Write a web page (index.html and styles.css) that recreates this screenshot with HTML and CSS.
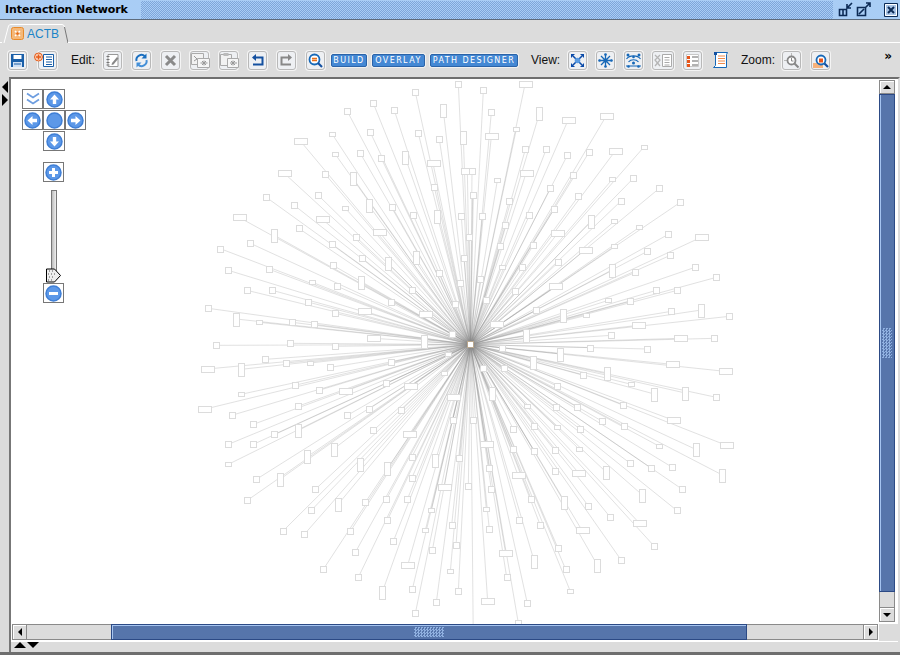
FILE: index.html
```html
<!DOCTYPE html>
<html lang="en">
<head>
<meta charset="utf-8">
<title>Interaction Network</title>
<link rel="stylesheet" href="styles.css">
</head>
<body>
<div class="window">
  <header class="titlebar">
    <span class="title">Interaction Network</span>
    <span class="dots"></span>
    <span class="winbtns">
      <svg class="winicon" width="15" height="15" viewBox="0 0 15 15"><path d="M1.500 7.500h7v6h-7z M5 8v5 M9 6l5-5 M9 2v4h4" fill="none" stroke="#0c2a55" stroke-width="1.600"/></svg>
      <svg class="winicon" width="15" height="15" viewBox="0 0 15 15"><path d="M1.500 5.500h8v8h-8z M3 12l5-5 M9 6l5-5 M10 1h4v4" fill="none" stroke="#0c2a55" stroke-width="1.600"/></svg>
      <svg class="winclose" width="14" height="14" viewBox="0 0 14 14"><path d="M.5.5h13v13H.5z" fill="#a9c4e6" stroke="#0c2a55"/><path d="M1.500 1.500h11v11h-11z" fill="none" stroke="#fff"/><path d="M4 4l6 6M10 4l-6 6" stroke="#0c2a55" stroke-width="2"/></svg>
    </span>
  </header>

  <nav class="tabbar">
    <div class="tab">
      <svg class="tabshape" width="66" height="20" viewBox="0 0 66 20"><path d="M2 19L6.500 2Q7 .5 9 .5H60Q62 .5 62.500 3" fill="none" stroke="#fff"/><path d="M62.500 3L66 19" fill="none" stroke="#777"/></svg>
      <svg class="tabicon" width="13" height="13" viewBox="0 0 13 13"><rect x=".5" y=".5" width="12" height="12" rx="2" fill="#f5b878" stroke="#e88a2a"/><path d="M4 4l5 5M9 4l-5 5" stroke="#fff" stroke-width="1.500"/><circle cx="6.500" cy="6.500" r="1.500" fill="#e8701a"/></svg>
      <span>ACTB</span>
    </div>
  </nav>

  <div class="toolbar">
    <div class="group file-group">
      <button class="ic"><svg width="17" height="17" viewBox="0 0 17 17"><path d="M2 2h13v13H2z" fill="#1a5fa8"/><path d="M4.500 3h8v4h-8z" fill="#fff"/><path d="M4 10h9v5H4z" fill="#cfe0f4"/><path d="M5 12h7" stroke="#1a5fa8"/></svg></button>
      <button class="ic ic-badge"><svg width="17" height="17" viewBox="0 0 17 17"><path d="M4.500 2.500h10v12h-10z" fill="#fff" stroke="#1a5fa8"/><path d="M7 5h6M7 7.500h6M7 10h6M7 12.500h6" stroke="#1a5fa8"/></svg><svg class="badge" width="9" height="10" viewBox="0 0 9 10"><circle cx="4.500" cy="5" r="4" fill="#f8cdb4" stroke="#e85c18"/><path d="M2 5h5M4.500 2.500v5" stroke="#e85c18" stroke-width="1.400"/></svg></button>
    </div>
    <span class="label label-edit">Edit:</span>
    <div class="group edit-group">
      <button class="ic"><svg width="17" height="17" viewBox="0 0 17 17"><path d="M4 2.500h10v12H4z" fill="#fff" stroke="#999"/><path d="M2.500 4.500h3M2.500 7.500h3M2.500 10.500h3M2.500 13h3" stroke="#777"/><path d="M8 11l5-6 1.500 1.500-5 6-2 .5z" fill="#888"/></svg></button>
      <button class="ic"><svg width="17" height="17" viewBox="0 0 17 17"><path d="M3.500 9A5 5 0 0 1 12 4.500" fill="none" stroke="#1a6fc0" stroke-width="2"/><path d="M13.500 1.500v5h-5z" fill="#1a6fc0"/><path d="M13.500 8A5 5 0 0 1 5 12.500" fill="none" stroke="#4590d8" stroke-width="2"/><path d="M3.500 15.500v-5h5z" fill="#4590d8"/></svg></button>
      <button class="ic"><svg width="17" height="17" viewBox="0 0 17 17"><path d="M4 4l9 9M13 4l-9 9" stroke="#8a8a8a" stroke-width="3"/></svg></button>
      <button class="ic"><svg class="wide-svg" width="21" height="17" viewBox="0 0 21 17"><path d="M1.500 1.500h12v11h-12z" fill="#f2f2f2" stroke="#aaa"/><path d="M7.500 6.500h12v9h-12z" fill="#f6f6f6" stroke="#aaa"/><path d="M4 4l3 3M4 9l3-2M12 9l4 4M16 9l-4 4M10.500 11h7M14 8.500v5" stroke="#999"/></svg></button>
      <button class="ic"><svg class="wide-svg" width="21" height="17" viewBox="0 0 21 17"><path d="M1.500 2.500h11v11h-11z" fill="#f2f2f2" stroke="#aaa"/><path d="M4.500 1h5v3h-5z" fill="#bbb"/><path d="M8.500 6.500h11v9h-11z" fill="#f6f6f6" stroke="#aaa"/><path d="M12 9l4 4M16 9l-4 4M11 11h7M14 8.500v5" stroke="#999"/></svg></button>
      <button class="ic"><svg width="17" height="17" viewBox="0 0 17 17"><path d="M6 5.500h7.500v7H4" fill="none" stroke="#1450a0" stroke-width="2"/><path d="M7 2v7L3 5.500z" fill="#1450a0"/></svg></button>
      <button class="ic"><svg width="17" height="17" viewBox="0 0 17 17"><path d="M11 5.500H3.500v7H13" fill="none" stroke="#888" stroke-width="2"/><path d="M10 2v7l4-3.500z" fill="#888"/></svg></button>
      <button class="ic"><svg width="17" height="17" viewBox="0 0 17 17"><circle cx="7.500" cy="7.500" r="5" fill="#fff" stroke="#1668b8" stroke-width="1.800"/><path d="M5 6.500h5M5 8.500h5" stroke="#e8701a" stroke-width="1.500"/><path d="M11 11l4 4" stroke="#1450a0" stroke-width="2.200"/></svg></button>
    </div>
    <div class="group action-group">
      <button class="pill pill-build">BUILD</button>
      <button class="pill pill-overlay">OVERLAY</button>
      <button class="pill pill-path">PATH DESIGNER</button>
    </div>
    <span class="label label-view">View:</span>
    <div class="group view-group">
      <button class="ic"><svg width="17" height="17" viewBox="0 0 17 17"><path d="M2 2h4L2 6zM15 2v4l-4-4zM2 15v-4l4 4zM15 15h-4l4-4z" fill="#0a4aa8"/><path d="M4 4l9 9M13 4l-9 9" stroke="#0a4aa8" stroke-width="1.500"/><circle cx="8.500" cy="8.500" r="2.800" fill="#5a9ae0"/></svg></button>
      <button class="ic"><svg width="17" height="17" viewBox="0 0 17 17"><path d="M8.500 2v13M2 8.500h13M4 4l9 9M13 4l-9 9" stroke="#1668b8" stroke-width="1.300"/><circle cx="8.500" cy="8.500" r="2" fill="#1668b8"/><circle cx="8.500" cy="2.500" r="1.300" fill="#1668b8"/><circle cx="8.500" cy="14.500" r="1.300" fill="#1668b8"/><circle cx="2.500" cy="8.500" r="1.300" fill="#1668b8"/><circle cx="14.500" cy="8.500" r="1.300" fill="#1668b8"/></svg></button>
      <button class="ic"><svg width="17" height="17" viewBox="0 0 17 17"><path d="M1.500 7A8 6 0 0 1 15.500 7M3.500 10A6 5 0 0 1 13.500 10M1 14h15" fill="none" stroke="#1668b8" stroke-width="1.200"/><circle cx="3" cy="3" r="1.500" fill="#1668b8"/><circle cx="14" cy="3" r="1.500" fill="#1668b8"/><circle cx="8.500" cy="5" r="1.300" fill="#1668b8"/><circle cx="8.500" cy="11" r="1.500" fill="#1668b8"/><circle cx="3.500" cy="14.500" r="1.300" fill="#1668b8"/><circle cx="13.500" cy="14.500" r="1.300" fill="#1668b8"/></svg></button>
      <button class="ic ic-wide"><svg width="20" height="17" viewBox="0 0 20 17"><path d="M9.500 2.500h9v12h-9z" fill="#fff" stroke="#aaa"/><path d="M11.500 5.500h5M11.500 8h5M11.500 10.500h5M11.500 13h5" stroke="#aaa"/><path d="M2 3l5 5-5 6M7 3L2 8l5 6" fill="none" stroke="#b5b5b5" stroke-width="1.300"/></svg></button>
      <button class="ic"><svg width="17" height="17" viewBox="0 0 17 17"><path d="M2.500 2.500h12v12h-12z" fill="#fff" stroke="#c8c8c8"/><path d="M3 4h3v3H3zM3 8h3v3H3zM3 12h3v3H3z" fill="#e8561a"/><path d="M8 5h6M8 9h6M8 13h6" stroke="#999" stroke-width="1.500"/></svg></button>
      <button class="ic ic-plain"><svg width="17" height="19" viewBox="0 0 17 19"><path d="M3.500 1.500h12l-1 2v13H1.500l2-2z" fill="#fff" stroke="#1668b8"/><path d="M6 5h7M6 7.500h7M6 10h7M6 12.500h7" stroke="#f08a4a"/><path d="M2 1h3v3H2z" fill="#1450a0"/></svg></button>
    </div>
    <span class="label label-zoom">Zoom:</span>
    <div class="group zoom-group">
      <button class="ic"><svg width="17" height="17" viewBox="0 0 17 17"><path d="M8.500 1v6M1 8.500h6" stroke="#b8b8b8"/><circle cx="8.500" cy="8.500" r="4" fill="#fff" stroke="#888" stroke-width="1.800"/><path d="M8.500 6v3h2" fill="none" stroke="#888"/><path d="M11.500 11.500l4 4" stroke="#888" stroke-width="2.200"/></svg></button>
      <button class="ic"><svg width="17" height="17" viewBox="0 0 17 17"><path d="M1 11h10v5H1z" fill="#f6b27c"/><circle cx="9" cy="8" r="4.500" fill="#fff" stroke="#1668b8" stroke-width="1.800"/><path d="M7 6.500h4v4H7z" fill="#e8561a"/><path d="M12.500 11.500l3.500 3.500" stroke="#1450a0" stroke-width="2.200"/></svg></button>
    </div>
    <span class="overflow">&raquo;</span>
  </div>

  <div class="main">
    <aside class="rail">
      <span class="tri tri-left"></span>
      <span class="tri tri-right"></span>
    </aside>
    <div class="pane">
      <div class="view">
        <div class="canvas" id="canvas">
          <svg class="network" id="network" width="868" height="545" viewBox="11 79 868 545"></svg>
          <div class="navpanel">
            <div class="navgrid">
              <button class="cell"><svg width="16" height="16" viewBox="0 0 16 16"><path d="M2 2.500l6 4 6-4M2 8.500l6 4 6-4" fill="none" stroke="#6d9de0" stroke-width="1.700"/></svg></button>
              <button class="cell"><svg class="orb" width="17" height="17" viewBox="0 0 17 17"><circle class="orbfill" cx="8.500" cy="8.500" r="7.500"/><path d="M8.500 3.500L4 8.500h2.800v4.500h3.400V8.500H13z" fill="#fff"/></svg></button>
              <span class="cell-empty"></span>
              <button class="cell"><svg class="orb" width="17" height="17" viewBox="0 0 17 17"><circle class="orbfill" cx="8.500" cy="8.500" r="7.500"/><path d="M3.500 8.500l5-4.500v2.800H13v3.400H8.500V13z" fill="#fff"/></svg></button>
              <button class="cell"><svg class="orb" width="17" height="17" viewBox="0 0 17 17"><circle class="orbfill" cx="8.500" cy="8.500" r="7.500"/></svg></button>
              <button class="cell"><svg class="orb" width="17" height="17" viewBox="0 0 17 17"><circle class="orbfill" cx="8.500" cy="8.500" r="7.500"/><path d="M13.500 8.500l-5-4.500v2.800H4v3.400h4.500V13z" fill="#fff"/></svg></button>
              <span class="cell-empty"></span>
              <button class="cell"><svg class="orb" width="17" height="17" viewBox="0 0 17 17"><circle class="orbfill" cx="8.500" cy="8.500" r="7.500"/><path d="M8.500 13.500L4 8.500h2.800V4h3.400v4.500H13z" fill="#fff"/></svg></button>
              <span class="cell-empty"></span>
            </div>
            <div class="zoomstack">
              <button class="cell cell-zoom"><svg class="orb" width="17" height="17" viewBox="0 0 17 17"><circle class="orbfill" cx="8.500" cy="8.500" r="7.500"/><path d="M7 4h3v3h3v3h-3v3H7v-3H4V7h3z" fill="#fff"/></svg></button>
              <div class="slider">
                <span class="slidertrack"></span>
                <svg class="sliderhandle" width="17" height="15" viewBox="0 0 17 15"><path d="M1.500 1h8l6 6.500-6 6.500h-8z" fill="#eee" stroke="#000"/><path d="M4 3h1M7 3h1M3 6h1M6 6h1M9 6h1M4 9h1M7 9h1M3 12h1M6 12h1" stroke="#555"/></svg>
              </div>
              <button class="cell cell-zoom"><svg class="orb" width="17" height="17" viewBox="0 0 17 17"><circle class="orbfill" cx="8.500" cy="8.500" r="7.500"/><path d="M4 7h9v3H4z" fill="#fff"/></svg></button>
            </div>
          </div>
        </div>
        <div class="vscroll">
          <button class="sbtn"><span class="arrow arrow-up"></span></button>
          <div class="vthumb"><span class="grip"></span></div>
          <div class="vtrack"></div>
          <button class="sbtn"><span class="arrow arrow-down"></span></button>
        </div>
        <div class="hscroll">
          <button class="sbtn"><span class="arrow arrow-left"></span></button>
          <div class="htrack htrack-a"></div>
          <div class="hthumb"><span class="grip"></span></div>
          <div class="htrack htrack-b"></div>
          <button class="sbtn"><span class="arrow arrow-right"></span></button>
        </div>
        <div class="corner"></div>
      </div>
      <div class="foot">
        <span class="tri tri-up"></span>
        <span class="tri tri-down"></span>
      </div>
    </div>
  </div>
</div>
<script src="network.js"></script>
</body>
</html>
```
FILE: styles.css
```css
* { box-sizing: border-box; }
html, body { margin: 0; padding: 0; background: #dcdcdc; }
body { font-family: "Liberation Sans", Arial, sans-serif; }
button { margin: 0; padding: 0; font: inherit; }

.window { width: 900px; height: 655px; display: flex; flex-direction: column; overflow: hidden; background: #dcdcdc; border-bottom: 3px solid #6e6e6e; }

/* title bar */
.titlebar { flex: none; height: 20px; display: flex; align-items: center; background: #a9cdf5; border-bottom: 1px solid #5d6b7c; padding-left: 5px; }
.title { width: 136px; flex: none; font: bold 11px "DejaVu Sans", sans-serif; letter-spacing: -0.1px; color: #000; white-space: nowrap; }
.dots { flex: none; width: 692px; height: 18px; background-image: conic-gradient(#7ea6da 25%, transparent 0 50%, #7ea6da 0 75%, transparent 0); background-size: 2px 2px; }
.winbtns { flex: 1; display: flex; align-items: center; padding-left: 5px; }
.winicon { flex: none; margin-right: 3px; }
.winclose { flex: none; margin-left: 10px; }

/* tabs */
.tabbar { flex: none; height: 23px; border-bottom: 1px solid #fff; display: flex; align-items: flex-end; padding-left: 2px; }
.tab { position: relative; width: 66px; height: 19px; margin-bottom: -1px; background: #dcdcdc; display: flex; align-items: center; padding-left: 9px; gap: 3px; color: #1a84c8; font-size: 12px; }
.tabshape { position: absolute; left: 0; top: 0; }
.tabicon { position: relative; flex: none; }
.tab span { position: relative; }

/* toolbar */
.toolbar { flex: none; height: 34px; display: flex; align-items: center; padding-left: 8px; }
.group { display: flex; align-items: center; flex: none; }
.file-group { gap: 11px; }
.edit-group { gap: 10px; margin-left: 7px; }
.action-group { gap: 5px; margin-left: 6px; }
.view-group { gap: 9px; margin-left: 7px; }
.zoom-group { gap: 10px; margin-left: 6px; }
.label { flex: none; font-size: 12px; color: #111; }
.label-edit { margin-left: 14px; width: 25px; }
.label-view { margin-left: 13px; width: 30px; }
.label-zoom { margin-left: 11px; width: 35px; }

.ic { position: relative; flex: none; width: 19px; height: 19px; display: flex; align-items: center; justify-content: flex-start; border: 1px solid #b8b8b8; border-radius: 3px; background: #eef0f3; box-shadow: 0 0 0 1px #f4f4f4; overflow: visible; }
.ic-wide { width: 22px; }
.ic-plain { border-color: transparent; background: transparent; box-shadow: none; }
.wide-svg { flex: none; margin-left: -1px; }
.badge { position: absolute; left: -5px; top: 0; }

.pill { flex: none; height: 13px; display: flex; align-items: center; justify-content: center; border: 1px solid #2b63a8; border-radius: 2px; background: #4488d4; box-shadow: 0 0 0 1px #f0f0f0; color: #fff; font: 8px "DejaVu Sans", sans-serif; letter-spacing: 1.400px; white-space: nowrap; }
.pill-build { width: 36px; }
.pill-overlay { width: 53px; }
.pill-path { width: 88px; }

.overflow { margin-left: auto; margin-right: 8px; margin-top: -8px; font: bold 12px "DejaVu Sans", sans-serif; color: #000; }

/* main */
.main { flex: 1; min-height: 0; display: flex; }
.rail { flex: none; width: 9px; display: flex; flex-direction: column; align-items: flex-end; padding: 4px 1px 0 0; gap: 1px; }
.pane { flex: 1; min-width: 0; display: flex; flex-direction: column; border-top: 2px solid #6e6e6e; border-left: 2px solid #777; border-right: 2px solid #dcdcdc; background: #fff; }
.view { flex: none; display: grid; grid-template-columns: 868px 16px 1fr; grid-template-rows: 545px 17px; }
.foot { flex: 1; background: #dcdcdc; border-top: 1px solid #fff; display: flex; padding-left: 3px; gap: 1px; }

.tri { display: block; width: 0; height: 0; flex: none; }
.tri-left { border: 6px solid transparent; border-left-width: 0; border-right: 6px solid #000; }
.tri-right { border: 6px solid transparent; border-right-width: 0; border-left: 6px solid #000; }
.tri-up { border: 6px solid transparent; border-top-width: 0; border-bottom: 6px solid #000; }
.tri-down { border: 6px solid transparent; border-bottom-width: 0; border-top: 6px solid #000; }

/* canvas */
.canvas { position: relative; overflow: hidden; background: #fff; grid-column: 1; grid-row: 1; }
.network { display: block; }
.navpanel { position: absolute; left: 11px; top: 10px; width: 64px; }
.navgrid { display: grid; grid-template-columns: 21px 22px 21px; grid-auto-rows: 20px; row-gap: 1px; }
.cell { width: 100%; height: 20px; display: flex; align-items: center; justify-content: center; background: #fff; border: 1px solid #777; }
.cell-zoom { width: 21px; }
.orb .orbfill { fill: #5c98e8; stroke: #3f7fd6; stroke-width: 1.500; }
.zoomstack { margin-left: 21px; margin-top: 11px; width: 21px; display: flex; flex-direction: column; }
.slider { position: relative; height: 101px; display: flex; justify-content: center; }
.slidertrack { margin-top: 8px; width: 6px; height: 90px; border: 1px solid #777; background: linear-gradient(90deg, #bbb, #eee); }
.sliderhandle { position: absolute; left: 2px; bottom: 0; }

/* scrollbars */
.vscroll { grid-column: 2; grid-row: 1; display: flex; flex-direction: column; padding: 1px 0 2px; background: #fff; }
.sbtn { flex: none; width: 15px; height: 15px; display: flex; align-items: center; justify-content: center; background: #dcdcdc; border: 1px solid #8a8a8a; box-shadow: inset 1px 1px 0 #fff; }
.vscroll .sbtn { width: 16px; height: 14px; }
.vscroll .sbtn:last-child { height: 15px; }
.vthumb { flex: 1; display: flex; align-items: center; justify-content: center; background: #5675ab; border: 1px solid #2c4a85; box-shadow: inset 1px 0 0 #a5c4f0; }
.vtrack { flex: none; height: 15px; background: #dcdcdc; border: solid #8a8a8a; border-width: 0 1px; }
.grip { display: block; background-image: conic-gradient(#8fb0e0 25%, transparent 0 50%, #8fb0e0 0 75%, transparent 0); background-size: 3px 3px; }
.vthumb .grip { width: 10px; height: 30px; }
.hthumb .grip { width: 30px; height: 10px; }
.hscroll { grid-column: 1; grid-row: 2; display: flex; padding: 0 0 1px 1px; background: #fff; }
.hscroll .sbtn { height: 16px; width: 15px; }
.htrack { flex: none; background: #dcdcdc; border: solid #8a8a8a; border-width: 1px 0; }
.htrack-a { width: 84px; }
.htrack-b { width: 116px; }
.hthumb { flex: none; width: 636px; display: flex; align-items: center; justify-content: center; background: #5675ab; border: 1px solid #2c4a85; box-shadow: inset 1px 1px 0 #a5c4f0; }
.corner { grid-column: 2 / 4; grid-row: 2; background: #dcdcdc; }

.arrow { display: block; width: 0; height: 0; }
.arrow-up { border: 4px solid transparent; border-top-width: 0; border-bottom: 4px solid #000; }
.arrow-down { border: 4px solid transparent; border-bottom-width: 0; border-top: 4px solid #000; }
.arrow-left { border: 4px solid transparent; border-left-width: 0; border-right: 4px solid #000; }
.arrow-right { border: 4px solid transparent; border-right-width: 0; border-left: 4px solid #000; }
```
FILE: network.js
```js
// Star network around the ACTB hub. Each quadrant lists "x,y,kind" in a local
// 3x grid; kinds: s square, w wide label, t tall label, m mini label.
var HUB = [470.5, 344.5];
var QUADRANTS = [
  [190, 80, "805,13,s 676,37,s 550,70,s 472,94,s 613,91,s 760,92,t 820,173,t 427,163,m 541,157,s 685,160,s 748,178,s 332,184,w 436,223,m 511,220,s 574,235,s 646,233,t 729,250,w 832,274,w 283,280,w 406,283,s 490,296,t 733,322,s 848,346,s 229,352,s 385,346,s 313,376,s 466,385,m 537,377,t 607,382,s 742,409,t 814,409,s 670,406,s 147,412,w 397,418,w 326,445,s 569,457,w 253,466,t 838,472,s 499,472,s 181,490,s 427,493,s 91,506,s 517,535,s 595,551,t 677,533,t 822,535,s 429,556,s 115,571,s 238,568,s 748,579,s 367,607,m 514,608,t 442,619,s 811,610,s 171,631,s 247,631,s 667,631,s 354,666,s 603,667,s 794,673,s 55,685,s 522,693,w 436,700,s 705,703,w 139,717,t 208,727,m 307,727,s 373,733,s 785,762,s 551,775,w 703,785,t 79,796,s 301,790,s 436,799,s"],
  [470, 80, "40,31,s 165,13,w 64,97,s 208,101,t 294,121,w 408,109,w 139,148,m 64,169,w 166,208,s 229,207,s 292,226,s 357,217,s 435,214,w 521,202,m 6,274,s 168,280,w 310,286,s 82,301,m 427,298,m 490,295,s 241,325,s 568,325,s 10,346,s 118,362,s 325,349,s 454,362,s 631,367,s 252,388,s 37,409,s 178,406,s 364,423,t 433,424,m 106,436,s 508,442,m 263,460,w 595,463,s 91,499,s 190,496,s 433,499,m 345,510,w 693,472,w 532,514,s 601,526,s 265,547,s 95,562,m 157,562,s 425,572,t 496,577,s 675,562,s 739,592,s 31,598,s 257,619,w 559,631,s 622,631,s 136,634,s 415,661,m 481,664,s 49,661,s 199,691,s 280,707,t 604,694,s 694,690,t 349,706,m 80,733,w 504,736,w 778,709,s 169,767,t 424,766,s 630,775,w 733,775,s"],
  [190, 345, "226,43,s 289,54,s 361,54,m 421,67,s 604,51,s 775,28,m 51,72,w 153,73,t 763,85,m 589,115,s 314,121,s 153,148,m 387,136,s 465,139,w 662,122,w 790,156,w 42,193,w 323,184,s 125,211,s 536,192,s 634,195,s 472,211,s 190,238,s 788,226,s 550,256,s 253,268,s 325,256,t 659,266,w 115,298,s 190,298,s 431,312,t 352,335,t 665,337,s 808,340,s 736,347,t 115,358,m 511,359,t 592,371,t 199,403,s 271,402,t 665,400,s 376,433,s 762,427,w 835,423,s 172,466,s 526,472,s 445,477,t 589,463,s 652,463,s 724,496,m 364,496,s 592,526,s 785,541,s 278,559,s 343,568,s 481,559,s 706,556,m 610,589,s 798,601,s 496,622,s 727,616,s 653,661,w 400,673,s 781,679,m 505,697,s 667,733,s 577,741,t 805,739,s 739,772,s 676,805,s"],
  [470, 345, "97,8,s 361,8,s 532,12,s 271,27,t 190,52,t 607,58,w 765,79,w 40,70,s 103,70,s 340,91,s 412,84,t 484,118,m 262,124,s 67,144,t 553,147,t 646,144,t 739,157,s 172,184,m 259,187,s 322,187,s 460,181,s 397,229,s 611,226,w 463,244,s 130,253,s 193,244,s 261,246,m 331,253,s 10,226,s 568,304,m 769,301,w 48,298,w 130,313,s 193,319,s 254,316,s 328,313,m 679,314,t 58,370,s 256,379,s 326,384,w 408,381,t 481,355,s 544,370,s 607,367,s 757,390,t 144,391,w 64,433,s 637,433,s 517,450,t 184,463,s 283,471,t 355,483,s 49,493,m 148,526,s 620,496,s 421,517,s 507,533,w 58,553,s 211,541,s 336,556,w 264,610,s 553,604,s 107,625,w 193,650,t 382,660,t 454,646,s 287,673,s 110,697,s 301,739,m 53,769,w 172,775,s 145,834,s 10,900,s"]
];
var SIZES = { s: [6, 6], w: [13, 6], t: [6, 13], m: [6, 4] };
var NS = "http://www.w3.org/2000/svg";
var svg = document.getElementById("network");

function el(name, attrs) {
  var node = document.createElementNS(NS, name);
  for (var key in attrs) node.setAttribute(key, attrs[key]);
  svg.appendChild(node);
  return node;
}

var nodes = [];
QUADRANTS.forEach(function (q) {
  q[2].split(" ").forEach(function (item) {
    var p = item.split(",");
    nodes.push({ x: q[0] + p[0] / 3, y: q[1] + p[1] / 3, kind: p[2] });
  });
});

nodes.forEach(function (n) {
  el("line", { x1: HUB[0], y1: HUB[1], x2: n.x, y2: n.y, stroke: "#888", "stroke-opacity": "0.25", "stroke-width": "1" });
});
nodes.forEach(function (n) {
  var s = SIZES[n.kind];
  el("rect", {
    x: Math.round(n.x - s[0] / 2) + 0.5,
    y: Math.round(n.y - s[1] / 2) + 0.5,
    width: s[0], height: s[1],
    fill: "#fff", stroke: "#dcdcdc", "shape-rendering": "crispEdges"
  });
});
el("rect", { x: 467.5, y: 341.5, width: 6, height: 6, fill: "#fff", stroke: "#b9a78e", "shape-rendering": "crispEdges" });
```
